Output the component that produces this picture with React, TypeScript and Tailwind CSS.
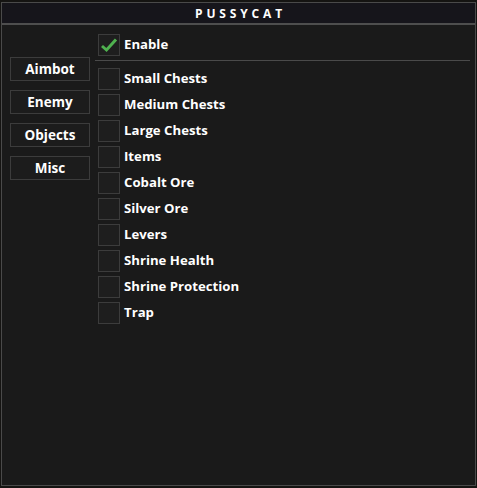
const tabs = ["Aimbot", "Enemy", "Objects", "Misc"]

const options = [
  "Small Chests",
  "Medium Chests",
  "Large Chests",
  "Items",
  "Cobalt Ore",
  "Silver Ore",
  "Levers",
  "Shrine Health",
  "Shrine Protection",
  "Trap",
]

function Box({ checked = false }: { checked?: boolean }) {
  return (
    <div className="w-[22px] h-[22px] border border-[#3c3c3c] bg-[#1e1e1e] flex items-center justify-center">
      {checked && (
        <svg width="18" height="16" viewBox="0 0 18 16">
          <path d="M2 9 L6.5 13 L16 2.5" fill="none" stroke="#4fb14f" strokeWidth="3" />
        </svg>
      )}
    </div>
  )
}

export default function App() {
  return (
    <div
      className="w-[477px] h-[488px] bg-[#151412] pt-[2px] pl-[1px] pr-[1px] pb-[2px]"
      style={{ fontFamily: '"Open Sans", "DejaVu Sans", sans-serif' }}
    >
      <div className="h-full border border-[#4a4a4a] bg-[#1a1a1a] flex flex-col">
        {/* Title bar */}
        <div className="h-[22px] bg-[#16151b] border-b-2 border-[#4e4e4e] flex items-center justify-center">
          <span className="text-[12px] font-bold text-white tracking-[0.32em] leading-none pl-[4px] pt-[1px]">
            PUSSYCAT
          </span>
        </div>

        <div className="flex flex-1">
          {/* Tabs */}
          <div className="w-[94px] pl-[8px] pt-[32px] flex flex-col gap-[9px]">
            {tabs.map((t) => (
              <div
                key={t}
                className="w-[80px] h-[24px] border border-[#3c3c3c] bg-[#1c1c1c] flex items-center justify-center text-[13.5px] font-bold text-white"
              >
                {t}
              </div>
            ))}
          </div>

          {/* Options */}
          <div className="flex-1 pt-[9px] pr-[5px]">
            <div className="flex items-center gap-[4px] pl-[2px] h-[22px]">
              <Box checked />
              <span className="text-[13.2px] font-bold text-white">Enable</span>
            </div>
            <div className="h-px bg-[#4a4a4a] mt-[4px] mb-[7px] -ml-[1px]" />
            <div className="flex flex-col gap-[4px] pl-[2px]">
              {options.map((o) => (
                <div key={o} className="flex items-center gap-[4px] h-[22px]">
                  <Box />
                  <span className="text-[13.2px] font-bold text-white">{o}</span>
                </div>
              ))}
            </div>
          </div>
        </div>
      </div>
    </div>
  )
}
